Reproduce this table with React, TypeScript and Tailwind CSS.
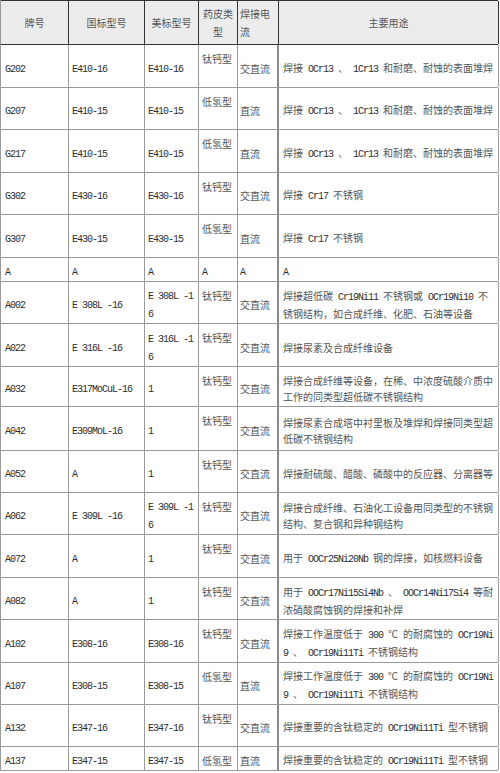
import React from "react";

type Row = {
  h: string;
  a: string;
  b: string;
  c: string;
  d: string;
  e: string;
  f: string;
};

const T1 = "焊接 OCr13 、 1Cr13 和耐磨、耐蚀的表面堆焊";
const T2 = "焊接 Cr17 不锈钢";
const T3 = "焊接工作温度低于 300 ℃ 的耐腐蚀的 OCr19Ni\n9 、 OCr19Ni11Ti 不锈钢结构";
const T4 = "焊接重要的含钛稳定的 OCr19Ni11Ti 型不锈钢";

const rows: Row[] = [
  { h: "h-[43px]", a: "G202", b: "E410-16", c: "E410-16", d: "钛钙型", e: "交直流", f: T1 },
  { h: "h-[42px]", a: "G207", b: "E410-15", c: "E410-15", d: "低氢型", e: "直流", f: T1 },
  { h: "h-[43px]", a: "G217", b: "E410-15", c: "E410-15", d: "低氢型", e: "直流", f: T1 },
  { h: "h-[42px]", a: "G302", b: "E430-16", c: "E430-16", d: "钛钙型", e: "交直流", f: T2 },
  { h: "h-[43px]", a: "G307", b: "E430-15", c: "E430-15", d: "低氢型", e: "直流", f: T2 },
  { h: "h-[24px]", a: "A", b: "A", c: "A", d: "A", e: "A", f: "A" },
  {
    h: "h-[42px]",
    a: "A002",
    b: "E 308L -16",
    c: "E 308L -1\n6",
    d: "钛钙型",
    e: "交直流",
    f: "焊接超低碳 Cr19Ni11 不锈钢或 OCr19Ni10 不\n锈钢结构，如合成纤维、化肥、石油等设备",
  },
  { h: "h-[43px]", a: "A022", b: "E 316L -16", c: "E 316L -1\n6", d: "钛钙型", e: "交直流", f: "焊接尿素及合成纤维设备" },
  {
    h: "h-[40px]",
    a: "A032",
    b: "E317MoCuL-16",
    c: "1",
    d: "钛钙型",
    e: "交直流",
    f: "焊接合成纤维等设备，在稀、中浓度硫酸介质中\n工作的同类型超低碳不锈钢结构",
  },
  {
    h: "h-[44px]",
    a: "A042",
    b: "E309MoL-16",
    c: "1",
    d: "钛钙型",
    e: "交直流",
    f: "焊接尿素合成塔中衬里板及堆焊和焊接同类型超\n低碳不锈钢结构",
  },
  { h: "h-[42px]", a: "A052", b: "A", c: "1", d: "钛钙型", e: "交直流", f: "焊接耐硫酸、醋酸、磷酸中的反应器、分离器等" },
  {
    h: "h-[42px]",
    a: "A062",
    b: "E 309L -16",
    c: "E 309L -1\n6",
    d: "钛钙型",
    e: "交直流",
    f: "焊接合成纤维、石油化工设备用同类型的不锈钢\n结构、复合钢和异种钢结构",
  },
  { h: "h-[43px]", a: "A072", b: "A", c: "1", d: "钛钙型", e: "交直流", f: "用于 OOCr25Ni20Nb 钢的焊接，如核燃料设备" },
  {
    h: "h-[42px]",
    a: "A082",
    b: "A",
    c: "1",
    d: "钛钙型",
    e: "交直流",
    f: "用于 OOCr17Ni15Si4Nb 、 OOCr14Ni17Si4 等耐\n浓硝酸腐蚀钢的焊接和补焊",
  },
  { h: "h-[43px]", a: "A102", b: "E308-16", c: "E308-16", d: "钛钙型", e: "交直流", f: T3 },
  { h: "h-[42px]", a: "A107", b: "E308-15", c: "E308-15", d: "低氢型", e: "直流", f: T3 },
  { h: "h-[42px]", a: "A132", b: "E347-16", c: "E347-16", d: "钛钙型", e: "交直流", f: T4 },
  { h: "h-[24px]", a: "A137", b: "E347-15", c: "E347-15", d: "低氢型", e: "直流", f: T4 },
];

function Txt({ s }: { s: string }) {
  const lines = s.split("\n");
  return (
    <>
      {lines.map((line, li) => (
        <div key={li} className="whitespace-pre leading-[16px]">
          {line.split(/([\u0000-\u007f]+)/).map((part, i) =>
            /^[\u0000-\u007f]+$/.test(part) ? (
              <span
                key={i}
                className="font-['Liberation_Mono',monospace] text-[10px] tracking-[-1px] text-[#2e2e2e]"
              >
                {part}
              </span>
            ) : (
              <span key={i}>{part}</span>
            )
          )}
        </div>
      ))}
    </>
  );
}

export default function App() {
  return (
    <div className="w-[500px] h-[773px] bg-white overflow-hidden font-['Noto_Sans_CJK_SC',sans-serif] text-[10px] text-[#555]">
      <div className="w-[498px] border-l border-[#999]">
        {/* header */}
        <div className="grid grid-cols-[68px_76px_54px_39px_41px_220px] h-[45px] bg-[#ececec] border-t border-b border-[#333]">
          <div className="flex items-center justify-center border-r border-[#333]">牌号</div>
          <div className="flex items-center justify-center border-r border-[#333]">国标型号</div>
          <div className="flex items-center justify-center border-r border-[#333]">美标型号</div>
          <div className="flex flex-col items-center justify-center border-r border-[#333] leading-[18px]">
            <div>药皮类</div>
            <div>型</div>
          </div>
          <div className="flex flex-col justify-center pl-[2px] border-r border-[#333] leading-[18px]">
            <div>焊接电</div>
            <div>流</div>
          </div>
          <div className="flex items-center justify-center border-r border-[#333]">主要用途</div>
        </div>
        {rows.map((r, i) => {
          const short = r.h === "h-[24px]";
          return (
            <div
              key={i}
              className={`grid grid-cols-[68px_76px_54px_39px_41px_220px] border-b border-[#999] ${r.h}`}
            >
              <div className="flex flex-col justify-center pl-[4px] pt-[5px] border-r border-[#999]">
                <Txt s={r.a} />
              </div>
              <div className="flex flex-col justify-center pl-[3px] pt-[5px] border-r border-[#999]">
                <Txt s={r.b} />
              </div>
              <div className="flex flex-col justify-center pl-[3px] pt-[5px] border-r border-[#999]">
                <Txt s={r.c} />
              </div>
              <div
                className={`flex flex-col pl-[3px] border-r border-[#999] ${
                  short ? "justify-center pt-[5px]" : "justify-start pt-[6px]"
                }`}
              >
                <Txt s={r.d} />
              </div>
              <div className="flex flex-col justify-center pl-[2px] pt-[5px] border-r-2 border-[#8a8a8a]">
                <Txt s={r.e} />
              </div>
              <div className="flex flex-col justify-center pl-[4px] pt-[5px] border-r border-[#999]">
                <Txt s={r.f} />
              </div>
            </div>
          );
        })}
      </div>
    </div>
  );
}
